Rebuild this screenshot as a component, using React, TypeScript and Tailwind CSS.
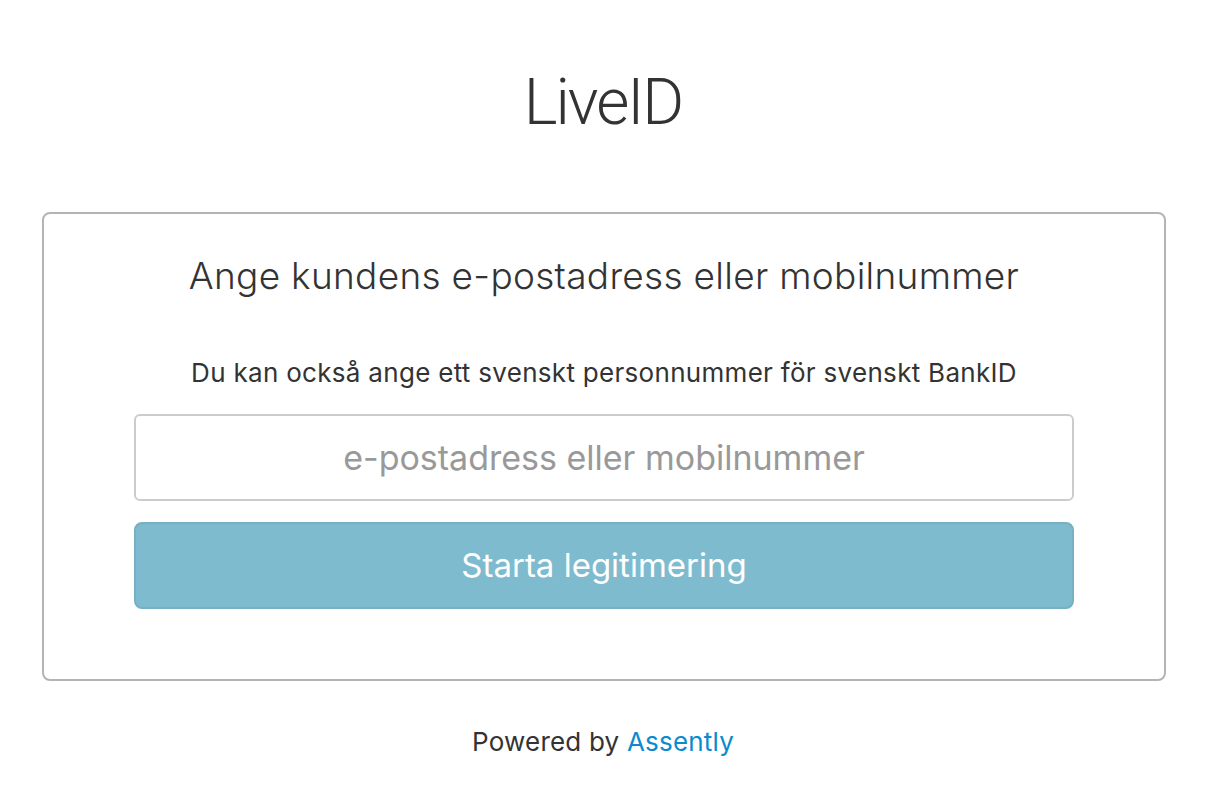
export default function App() {
  return (
    <div className="min-h-[790px] w-[1206px] bg-white text-[#333] font-['Inter',Arial,sans-serif]">
      {/* title */}
      <div className="pt-[68px] text-center">
        <h1 className="font-['Roboto',sans-serif] font-light text-[64px] leading-[70px] tracking-[-2px]">LiveID</h1>
      </div>

      {/* card */}
      <div className="ml-[42px] mt-[74px] w-[1124px] h-[469px] rounded-[8px] border-2 border-[#b4b4b4] pt-[40px]">
        <h2 className="text-center font-light text-[37px] leading-[44px] tracking-[0.3px]">
          Ange kundens e-postadress eller mobilnummer
        </h2>
        <p className="mt-[60px] text-center text-[26px] leading-[30px] tracking-[0.3px]">
          Du kan också ange ett svenskt personnummer för svenskt BankID
        </p>
        <div className="mx-auto mt-[26px] w-[940px] flex flex-col gap-[21px]">
          <input
            type="text"
            placeholder="e-postadress eller mobilnummer"
            className="h-[87px] w-full rounded-[6px] border-2 border-[#cccccc] bg-white px-4 text-center text-[34px] text-[#333] outline-none placeholder:text-[#999]"
          />
          <button className="h-[87px] w-full rounded-[8px] border-2 border-[#76b0c2] bg-[#7fbbce] text-[33px] text-white">
            Starta legitimering
          </button>
        </div>
      </div>

      {/* footer */}
      <p className="mt-[46px] text-center text-[26px] leading-[30px] tracking-[0.2px]">
        Powered by <a href="#" className="text-[#0b8bce]">Assently</a>
      </p>
    </div>
  )
}
